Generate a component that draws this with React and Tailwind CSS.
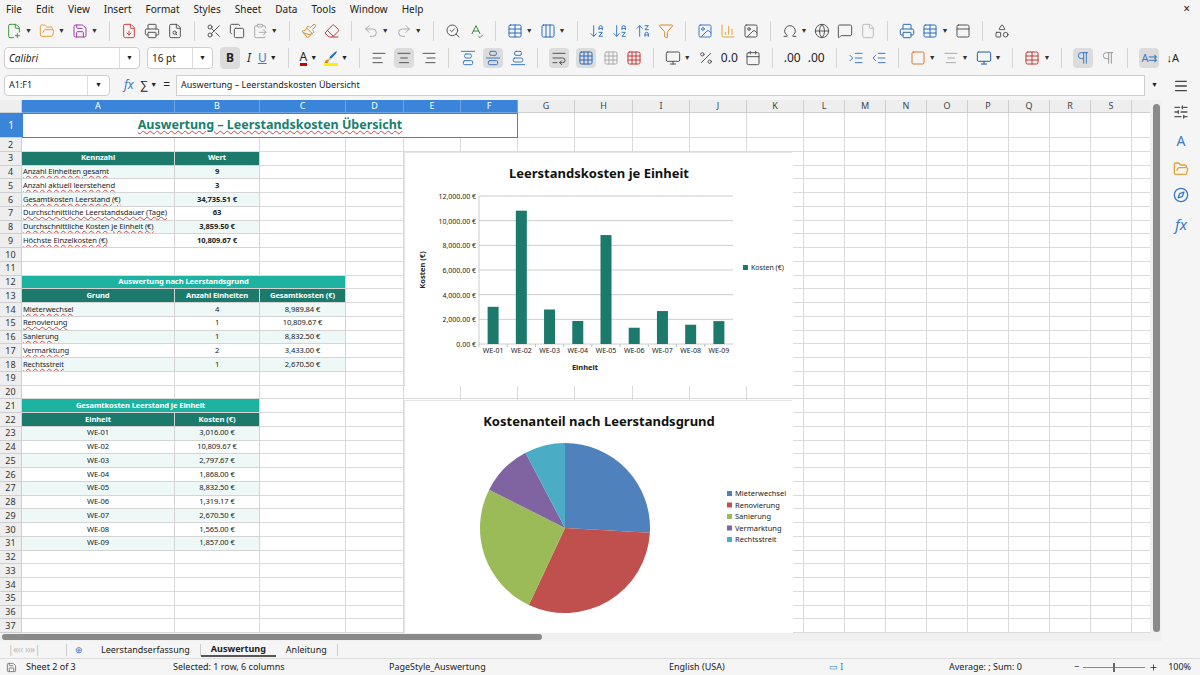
import React from 'react';
import {
  FilePlus2, FolderOpen, Save, FileDown, Printer, FileSearch, Scissors, Copy, ClipboardPaste,
  Paintbrush, Eraser, Undo2, Redo2, SearchCheck, SpellCheck, Table, Columns3, ArrowDownAZ,
  ArrowUpZA, Filter, Image, BarChart3, Omega, Globe, MessageSquare, File, Printer as Pr,
  PanelTop, Shapes, AlignLeft, AlignCenter, AlignRight, AlignVerticalJustifyStart,
  AlignVerticalJustifyCenter, AlignVerticalJustifyEnd, WrapText, Grid3x3, Percent, Calendar,
  IndentIncrease, IndentDecrease, Square, Monitor, Pilcrow, Menu, SlidersHorizontal, Compass,
  Save as SaveSmall, Plus
} from 'lucide-react';

const COLS = ['A','B','C','D','E','F','G','H','I','J','K','L','M','N','O','P','Q','R','S',''];
const W = [153,85,86,58,57,57,57,58,57,57,57,41,41,41,41,41,41,41,41,41];

const dark = 'bg-[#1b7a6c] text-white font-bold justify-center';
const light = 'bg-[#1db3a0] text-white font-bold justify-center';
const tint = 'bg-[#eef9f7]';
const sp = 'underline decoration-wavy decoration-[#e04040] decoration-1';

const units = [
  ['WE-01','3,016.00 €'],['WE-02','10,809.67 €'],['WE-03','2,797.67 €'],['WE-04','1,868.00 €'],
  ['WE-05','8,832.50 €'],['WE-06','1,319.17 €'],['WE-07','2,670.50 €'],['WE-08','1,565.00 €'],['WE-09','1,857.00 €'],
];
const reasons = [
  ['Mieterwechsel','4','8,989.84 €'],['Renovierung','1','10,809.67 €'],['Sanierung','1','8,832.50 €'],
  ['Vermarktung','2','3,433.00 €'],['Rechtsstreit','1','2,670.50 €'],
];
const kpis = [
  ['Anzahl Einheiten gesamt','9'],['Anzahl aktuell leerstehend','3'],['Gesamtkosten Leerstand (€)','34,735.51 €'],
  ['Durchschnittliche Leerstandsdauer (Tage)','63'],['Durchschnittliche Kosten je Einheit (€)','3,859.50 €'],['Höchste Einzelkosten (€)','10,809.67 €'],
];

function rowSpec(r) {
  if (r === 3) return [{ s: 1, t: 'Kennzahl', c: dark }, { s: 1, t: 'Wert', c: dark }];
  if (r >= 4 && r <= 9) {
    const [k, v] = kpis[r - 4];
    const bg = r % 2 === 0 ? tint : '';
    return [{ s: 1, t: k, c: bg, u: true }, { s: 1, t: v, c: `${bg} justify-center font-bold` }];
  }
  if (r === 12) return [{ s: 3, t: 'Auswertung nach Leerstandsgrund', c: light }];
  if (r === 13) return [{ s: 1, t: 'Grund', c: dark }, { s: 1, t: 'Anzahl Einheiten', c: dark }, { s: 1, t: 'Gesamtkosten (€)', c: dark }];
  if (r >= 14 && r <= 18) {
    const [a, b, c] = reasons[r - 14];
    const bg = r % 2 === 0 ? tint : '';
    return [{ s: 1, t: a, u: true, c: bg }, { s: 1, t: b, c: `${bg} justify-center` }, { s: 1, t: c, c: `${bg} justify-center` }];
  }
  if (r === 21) return [{ s: 2, t: 'Gesamtkosten Leerstand je Einheit', c: light }];
  if (r === 22) return [{ s: 1, t: 'Einheit', c: dark }, { s: 1, t: 'Kosten (€)', c: dark }];
  if (r >= 23 && r <= 31) {
    const [a, b] = units[r - 23];
    const bg = r % 2 === 1 ? tint : '';
    return [{ s: 1, t: a, c: `${bg} justify-center` }, { s: 1, t: b, c: `${bg} justify-center` }];
  }
  return [];
}

function Row({ r }) {
  const spec = rowSpec(r);
  const cells = [];
  let ci = 0;
  spec.forEach((seg, i) => {
    const w = W.slice(ci, ci + seg.s).reduce((a, b) => a + b, 0);
    cells.push(
      <div key={'s' + i} style={{ width: w }} className={`shrink-0 h-full flex items-center px-[1px] border-r border-b border-[#d4d4d4] overflow-hidden whitespace-nowrap ${seg.c}`}>
        <span className={seg.u ? sp : ''}>{seg.t}</span>
      </div>
    );
    ci += seg.s;
  });
  for (; ci < W.length; ci++) {
    cells.push(<div key={ci} style={{ width: W[ci] }} className="shrink-0 h-full border-r border-b border-[#dadada]" />);
  }
  return (
    <div className="flex h-[13.75px] text-[7.6px] tracking-[-0.1px] text-[#222]">
      <div className="w-[22px] shrink-0 h-full bg-[#eeeeee] border-r border-b border-[#cfcfcf] flex items-center justify-center text-[9px] tracking-normal text-[#333] font-['Open_Sans']">{r}</div>
      {cells}
    </div>
  );
}

function BarChart() {
  const vals = [3016, 10809.67, 2797.67, 1868, 8832.5, 1319.17, 2670.5, 1565, 1857];
  const x0 = 74, x1 = 328, y0 = 191, y1 = 43;
  const slot = (x1 - x0) / 9;
  const ticks = [0, 2000, 4000, 6000, 8000, 10000, 12000];
  return (
    <svg width="388" height="233" className="font-['Lato']">
      <rect width="388" height="233" fill="#fff" />
      <text x="194" y="25" textAnchor="middle" fontSize="13" fontWeight="700" fill="#111">Leerstandskosten je Einheit</text>
      {ticks.map(t => {
        const y = y0 - (t / 12000) * (y0 - y1);
        return (
          <g key={t}>
            <line x1={x0} x2={x1} y1={y} y2={y} stroke="#bfbfbf" strokeWidth="0.8" />
            <text x={x0 - 3} y={y + 3} textAnchor="end" fontSize="7" fill="#222">{t.toLocaleString('en-US')}.00 €</text>
          </g>
        );
      })}
      <line x1={x0} x2={x0} y1={y1} y2={y0} stroke="#bfbfbf" strokeWidth="0.8" />
      {vals.map((v, i) => {
        const h = (v / 12000) * (y0 - y1);
        const cx = x0 + slot * (i + 0.5);
        return (
          <g key={i}>
            <rect x={cx - 5.5} y={y0 - h} width="11" height={h} fill="#1b7a6c" />
            <line x1={x0 + slot * i} x2={x0 + slot * i} y1={y0} y2={y0 + 3} stroke="#bfbfbf" />
            <text x={cx} y={y0 + 9} textAnchor="middle" fontSize="7" fill="#222">WE-0{i + 1}</text>
          </g>
        );
      })}
      <text x="180" y="217" textAnchor="middle" fontSize="7.5" fontWeight="700" fill="#222">Einheit</text>
      <text x="20" y="117" textAnchor="middle" fontSize="7.5" fontWeight="700" fill="#222" transform="rotate(-90 20 117)">Kosten (€)</text>
      <rect x="338" y="112" width="5" height="5" fill="#1b7a6c" />
      <text x="346" y="117" fontSize="7" fill="#222">Kosten (€)</text>
    </svg>
  );
}

function PieChart() {
  const data = [
    ['Mieterwechsel', 8989.84, '#4f81bd'], ['Renovierung', 10809.67, '#c0504d'], ['Sanierung', 8832.5, '#9bbb59'],
    ['Vermarktung', 3433, '#8064a2'], ['Rechtsstreit', 2670.5, '#4bacc6'],
  ];
  const total = data.reduce((a, d) => a + d[1], 0);
  const cx = 160, cy = 127, r = 85;
  let a = -Math.PI / 2;
  return (
    <svg width="388" height="250" className="font-['Lato']">
      <rect width="388" height="250" fill="#fff" />
      <text x="194" y="25" textAnchor="middle" fontSize="13" fontWeight="700" fill="#111">Kostenanteil nach Leerstandsgrund</text>
      {data.map(([n, v, c]) => {
        const a2 = a + (v / total) * Math.PI * 2;
        const p = `M${cx},${cy} L${cx + r * Math.cos(a)},${cy + r * Math.sin(a)} A${r},${r} 0 ${a2 - a > Math.PI ? 1 : 0} 1 ${cx + r * Math.cos(a2)},${cy + r * Math.sin(a2)} Z`;
        a = a2;
        return <path key={n} d={p} fill={c} />;
      })}
      {data.map(([n, , c], i) => (
        <g key={n}>
          <rect x="322" y={90 + i * 11.5} width="5" height="5" fill={c} />
          <text x="330" y={95 + i * 11.5} fontSize="7.5" fill="#222">{n}</text>
        </g>
      ))}
    </svg>
  );
}

const I = ({ icon: Ic, color = '#555', drop }) => (
  <div className="flex items-center">
    <Ic size={16} color={color} strokeWidth={1.5} />
    {drop && <span className="text-[7px] text-[#333] ml-[3px]">▼</span>}
  </div>
);
const Sep = () => <div className="w-px h-5 bg-[#d6d6d6] mx-1" />;

export default function App() {
  const rows = [];
  for (let r = 2; r <= 37; r++) rows.push(<Row key={r} r={r} />);
  return (
    <div className="w-[1200px] h-[675px] overflow-hidden bg-[#f5f5f5] font-['Open_Sans',sans-serif] text-[#222] flex flex-col">
      {/* menu */}
      <div className="h-[18px] flex items-center gap-[14px] px-[6px] text-[10px] shrink-0">
        {['File','Edit','View','Insert','Format','Styles','Sheet','Data','Tools','Window','Help'].map(m => <span key={m}>{m}</span>)}
        <span className="ml-auto text-[12px] mr-1">×</span>
      </div>
      {/* toolbar 1 */}
      <div className="h-[26px] flex items-center gap-[7px] px-[6px] shrink-0">
        <I icon={FilePlus2} color="#3a9a3a" drop /><I icon={FolderOpen} color="#e5a23a" drop /><I icon={Save} color="#a33aa3" drop /><Sep />
        <I icon={FileDown} color="#c44" /><I icon={Printer} /><I icon={FileSearch} /><Sep />
        <I icon={Scissors} /><I icon={Copy} /><I icon={ClipboardPaste} color="#aaa" drop /><Sep />
        <I icon={Paintbrush} color="#d98a2b" /><I icon={Eraser} color="#c33" /><Sep />
        <I icon={Undo2} color="#aaa" drop /><I icon={Redo2} color="#aaa" drop /><Sep />
        <I icon={SearchCheck} /><I icon={SpellCheck} color="#3a8a3a" /><Sep />
        <I icon={Table} color="#2a6ab8" drop /><I icon={Columns3} color="#2a6ab8" drop /><Sep />
        <I icon={ArrowDownAZ} color="#3a7ac8" /><I icon={ArrowDownAZ} color="#3a7ac8" /><I icon={ArrowUpZA} color="#3a7ac8" /><I icon={Filter} color="#d98a2b" /><Sep />
        <I icon={Image} color="#3a7ac8" /><I icon={BarChart3} color="#e5a23a" /><I icon={Image} /><Sep />
        <I icon={Omega} drop /><I icon={Globe} /><I icon={MessageSquare} /><I icon={File} color="#bbb" /><Sep />
        <I icon={Pr} color="#2a6ab8" /><I icon={Table} color="#2a6ab8" drop /><I icon={PanelTop} /><Sep /><I icon={Shapes} />
      </div>
      {/* toolbar 2 */}
      <div className="h-[28px] flex items-center gap-[7px] px-[4px] shrink-0">
        <div className="w-[136px] h-[22px] bg-white border border-[#cfcfcf] rounded-sm flex items-center text-[10px] italic pl-1">Calibri<span className="ml-auto w-[20px] border-l border-[#ddd] h-full flex items-center justify-center text-[7px] not-italic">▼</span></div>
        <div className="w-[66px] h-[22px] bg-white border border-[#cfcfcf] rounded-sm flex items-center text-[10px] pl-1">16 pt<span className="ml-auto w-[20px] border-l border-[#ddd] h-full flex items-center justify-center text-[7px]">▼</span></div>
        <div className="w-[20px] h-[22px] bg-[#dcdcdc] rounded flex items-center justify-center font-bold text-[12px]">B</div>
        <span className="italic text-[12px]">I</span>
        <span className="underline text-[12px] text-[#3a7ac8]">U</span><span className="text-[7px] -ml-1">▼</span><Sep />
        <span className="text-[12px] border-b-[3px] border-[#c00] leading-[13px]">A</span><span className="text-[7px] -ml-1">▼</span>
        <span className="text-[11px] border-b-[3px] border-[#ffee00] leading-[13px]">🖌</span><span className="text-[7px] -ml-1">▼</span><Sep />
        <I icon={AlignLeft} /><div className="bg-[#dcdcdc] rounded p-[2px]"><I icon={AlignCenter} /></div><I icon={AlignRight} /><Sep />
        <I icon={AlignVerticalJustifyStart} color="#3a7ac8" /><div className="bg-[#dcdcdc] rounded p-[2px]"><I icon={AlignVerticalJustifyCenter} color="#3a7ac8" /></div><I icon={AlignVerticalJustifyEnd} color="#3a7ac8" /><Sep />
        <div className="bg-[#dcdcdc] rounded p-[2px]"><I icon={WrapText} /></div><div className="bg-[#dcdcdc] rounded p-[2px]"><I icon={Grid3x3} color="#2a6ab8" /></div><I icon={Grid3x3} color="#aaa" /><I icon={Grid3x3} color="#c33" /><Sep />
        <I icon={Monitor} drop /><I icon={Percent} /><span className="text-[12px]">0.0</span><I icon={Calendar} /><Sep />
        <span className="text-[12px]">.00</span><span className="text-[12px]">.00</span><Sep />
        <I icon={IndentIncrease} color="#3a7ac8" /><I icon={IndentDecrease} color="#3a7ac8" /><Sep />
        <I icon={Square} color="#d9772b" drop /><I icon={AlignCenter} color="#aaa" drop /><I icon={Monitor} color="#1e5fa8" drop /><Sep />
        <I icon={Table} color="#c33" drop /><Sep />
        <div className="bg-[#dcdcdc] rounded p-[2px]"><I icon={Pilcrow} color="#3a7ac8" /></div><I icon={Pilcrow} color="#999" /><Sep />
        <div className="bg-[#dcdcdc] rounded p-[2px] text-[11px] text-[#3a7ac8]">A⇉</div><span className="text-[11px]">↓A</span>
      </div>
      <div className="flex flex-1 min-h-0">
        <div className="flex flex-col w-[1162px]">
          {/* formula bar */}
          <div className="h-[26px] flex items-center gap-[6px] px-[4px] shrink-0">
            <div className="w-[106px] h-[21px] bg-white border border-[#cfcfcf] rounded-sm flex items-center text-[9px] pl-1">A1:F1<span className="ml-auto w-[22px] h-full border-l border-[#ddd] flex items-center justify-center text-[7px]">▼</span></div>
            <span className="italic text-[12px] text-[#3a7ac8] font-['Liberation_Serif'] ml-2">fx</span>
            <span className="text-[12px]">∑</span><span className="text-[7px] -ml-1">▼</span><span className="text-[12px]">=</span>
            <div className="flex-1 h-[21px] bg-white border border-[#cfcfcf] flex items-center text-[9px] pl-1">Auswertung – Leerstandskosten Übersicht</div>
            <span className="text-[7px]">▼</span>
          </div>
          {/* grid */}
          <div className="flex h-[538px] mt-[2px] bg-white">
            <div className="relative w-[1150px] overflow-hidden font-['Lato']">
              <div className="flex h-[13px] text-[9px] font-['Open_Sans']">
                <div className="w-[22px] shrink-0 bg-[#eeeeee] border-r border-b border-[#cfcfcf]" />
                {COLS.map((c, i) => (
                  <div key={i} style={{ width: W[i] }} className={`shrink-0 flex items-center justify-center border-r border-b ${i < 6 ? 'bg-[#3a85d9] text-white border-[#6ea4e4]' : 'bg-[#eeeeee] text-[#444] border-[#cfcfcf]'}`}>{c}</div>
                ))}
              </div>
              <div className="flex h-[25px]">
                <div className="w-[22px] shrink-0 bg-[#3a85d9] text-white flex items-center justify-center text-[10px] font-['Open_Sans'] border-b border-[#cfcfcf]">1</div>
                <div className="w-[496px] shrink-0 border border-[#3a85d9] flex items-center justify-center text-[12.5px] font-bold text-[#17806f]">
                  <span className={sp}>Auswertung – Leerstandskosten Übersicht</span>
                </div>
                {W.slice(6).map((w, i) => <div key={i} style={{ width: w }} className="shrink-0 border-r border-b border-[#dadada]" />)}
              </div>
              {rows}
              <div className="absolute left-[404px] top-[52px] w-[388px] h-[233px] border border-[#e4e4e4]"><BarChart /></div>
              <div className="absolute left-[404px] top-[300px] w-[388px] h-[250px] border border-[#e4e4e4]"><PieChart /></div>
            </div>
            <div className="w-[12px] bg-[#f0f0f0] flex justify-center pt-[4px]">
              <div className="w-[7px] h-[528px] bg-[#8a8a8a] rounded" />
            </div>
          </div>
          <div className="h-[9px] bg-[#f0f0f0] flex items-center px-[2px]">
            <div className="w-[540px] h-[6px] bg-[#8a8a8a] rounded" />
          </div>
        </div>
        {/* sidebar */}
        <div className="w-[38px] flex flex-col items-center gap-[10px] pt-[6px]">
          <Menu size={16} color="#444" />
          <SlidersHorizontal size={16} color="#555" />
          <span className="text-[14px] text-[#3a7ac8]">A</span>
          <FolderOpen size={16} color="#e5a23a" />
          <Compass size={16} color="#3a7ac8" />
          <span className="italic text-[15px] text-[#3a7ac8] font-['Liberation_Serif']">fx</span>
        </div>
      </div>
      {/* tabs */}
      <div className="h-[17px] flex items-center text-[9px] shrink-0 bg-[#f5f5f5]">
        <div className="w-[66px] text-[#bbb] text-[10px] pl-2 tracking-tighter">|«‹‹ ››»|</div>
        <div className="w-px h-3 bg-[#ccc]" />
        <span className="w-[24px] text-center text-[#3a7ac8]">⊕</span>
        <span className="px-[10px]">Leerstandserfassung</span>
        <div className="w-px h-3 bg-[#ccc]" />
        <span className="px-[10px] font-bold border-b-2 border-[#555]">Auswertung</span>
        <span className="px-[10px]">Anleitung</span>
        <div className="w-px h-3 bg-[#ccc]" />
      </div>
      {/* status */}
      <div className="h-[17px] flex items-center text-[9px] shrink-0 border-t border-[#ddd]">
        <div className="w-[22px] flex justify-center"><SaveSmall size={11} color="#777" /></div>
        <span className="w-[151px] pl-1">Sheet 2 of 3</span>
        <span className="w-[216px]">Selected: 1 row, 6 columns</span>
        <span className="w-[280px]">PageStyle_Auswertung</span>
        <span className="w-[160px]">English (USA)</span>
        <span className="w-[120px] text-[#3a7ac8]">▭ I</span>
        <span className="w-[125px]">Average: ; Sum: 0</span>
        <span>−</span>
        <div className="w-[62px] h-px bg-[#888] mx-1 relative"><div className="absolute left-[30px] -top-[4px] w-[2px] h-[9px] bg-[#666]" /></div>
        <Plus size={9} />
        <span className="ml-[10px]">100%</span>
      </div>
    </div>
  );
}
